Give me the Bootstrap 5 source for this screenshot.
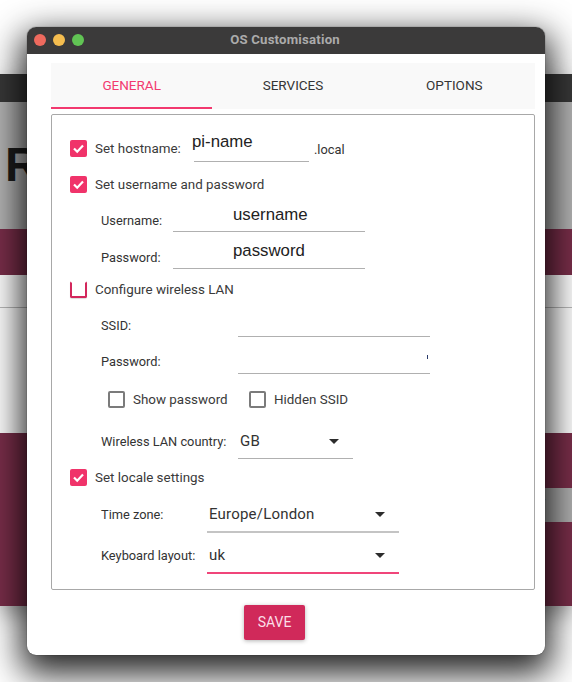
<!DOCTYPE html>
<html>
<head>
    <title>OS Customisation</title>
    <link href="https://cdn.jsdelivr.net/npm/bootstrap@5.3.0/dist/css/bootstrap.min.css" rel="stylesheet">
    <style>
        html, body { margin: 0; height: 682px; overflow: hidden; background: #fff; }
        body { position: relative; width: 572px; font-family: Roboto, sans-serif; color: #333; }

        /* window behind the dialog */
        .back-win { position: absolute; left: 0; width: 572px; top: 74px; height: 532px; box-shadow: 0 8px 20px rgba(0,0,0,.35); display: flex; flex-direction: column; overflow: hidden; }
        .back-title { height: 28px; background: #383838; }
        .back-head { height: 127px; background: #b4b4b4; position: relative; }
        .back-band { height: 46px; background: #7a2e4a; }
        .back-strip { height: 33px; background: #fff; border-bottom: 1px solid #bbb; }
        .back-body { height: 125px; background: #fff; }
        .back-foot { flex: 1; background: #7a2e4a; position: relative; }
        .back-btn { position: absolute; right: 0; top: 55px; width: 50px; height: 34px; background: #b0b0b0; color: #666; font-size: 14px; line-height: 34px; padding-left: 15px; }
        .back-letter { position: absolute; left: 5px; top: 39px; font: 700 48px/1 "Liberation Sans", sans-serif; color: #1c1c1c; }

        /* dialog */
        .dlg { position: absolute; left: 27px; top: 27px; width: 518px; height: 628px; background: #fff; border-radius: 9px; overflow: hidden; box-shadow: 0 0 1px rgba(0,0,0,.8), 0 13px 34px 6px rgba(0,0,0,.85); }
        .dlg-title { height: 27px; padding-right: 2px; background: #3b3a3a; position: relative; color: #ababab; font: 700 13.2px/26px Roboto, sans-serif; text-align: center; letter-spacing: .2px; }
        .dot { width: 12px; height: 12px; border-radius: 50%; }
        .dots { position: absolute; left: 7px; top: 7px; gap: 7px; }
        .dlg-tabs { margin: 9px 10px 0 24px; height: 46px; background: #f9f9f9; }
        .dlg-tab { flex: 1 1 0; height: 46px; line-height: 45px; text-align: center; font-size: 13.5px; color: #353535; }
        .dlg-tab.on { color: #f2396f; border-bottom: 2px solid #f2396f; }

        .frame { margin: 5px 10px 0 24px; height: 476px; border: 1px solid #a8a8a8; border-radius: 2px; padding-left: 18px; }
        .line { display: flex; align-items: center; position: absolute; }
        .frame-in { position: relative; height: 100%; }
        .tick { width: 17px; height: 17px; border-radius: 2px; background: #f0336a; flex: none; display: block; }
        .tick.off { background: transparent; border: 2px solid #d3275c; border-top-color: transparent; box-shadow: 0 1px 1px rgba(0,0,0,.15); }
        .tick.plain { background: transparent; border: 2px solid #7b7b7b; }
        .cap { color: #3a3a3a; font-size: 13.4px; line-height: 17px; white-space: nowrap; }
        .lbl { position: absolute; color: #333; font-size: 12.8px; white-space: nowrap; }
        .under { position: absolute; height: 1px; background: #b0b0b0; }
        .val { position: absolute; font: 16.8px/20px "Liberation Sans", sans-serif; color: #222; white-space: nowrap; }
        .sel { position: absolute; font: 15px/20px Roboto, sans-serif; color: #333; letter-spacing: .2px; }
        .caret { position: absolute; width: 0; height: 0; border-left: 5px solid transparent; border-right: 5px solid transparent; border-top: 5px solid #2c2c2c; }
        .speck { position: absolute; left: 357px; top: 240px; width: 1px; height: 4px; background: #2a3a6a; }

        .btn-save { position: absolute; left: 217px; top: 578px; width: 61px; height: 35px; padding: 0; border: 0; border-radius: 2px; background: #d0295a; color: #fbdfe7; font-size: 14px; box-shadow: 0 1px 4px rgba(0,0,0,.3); }
    </style>
</head>
<body>
    <div class="back-win">
        <div class="back-title"></div>
        <div class="back-head"><div class="back-letter">R</div></div>
        <div class="back-band"></div>
        <div class="back-strip"></div>
        <div class="back-body"></div>
        <div class="back-foot"><div class="back-btn">T</div></div>
    </div>

    <div class="dlg">
        <div class="dlg-title">
            <div class="dots d-flex">
                <span class="dot" style="background:#ee6a5e"></span>
                <span class="dot" style="background:#f5bd4f"></span>
                <span class="dot" style="background:#61c454"></span>
            </div>
            OS Customisation
        </div>

        <div class="dlg-tabs d-flex">
            <div class="dlg-tab on">GENERAL</div>
            <div class="dlg-tab">SERVICES</div>
            <div class="dlg-tab">OPTIONS</div>
        </div>

        <div class="frame">
            <div class="frame-in">
                <!-- coordinates inside the frame: page x - 70, page y - 115 -->
                <div class="line gap-2" style="left:0;top:25px"><svg class="tick" viewBox="0 0 17 17"><path d="M4 8.5l3.2 3.2L13 5.6" fill="none" stroke="#fff" stroke-width="2.2"/></svg><span class="cap">Set hostname:</span></div>
                <div class="val" style="left:122px;top:17px">pi-name</div>
                <div class="under" style="left:124px;top:46px;width:115px"></div>
                <div class="lbl" style="left:244px;top:25px">.local</div>

                <div class="line gap-2" style="left:0;top:61px"><svg class="tick" viewBox="0 0 17 17"><path d="M4 8.5l3.2 3.2L13 5.6" fill="none" stroke="#fff" stroke-width="2.2"/></svg><span class="cap">Set username and password</span></div>
                <div class="lbl" style="left:31px;top:96px">Username:</div>
                <div class="val" style="left:163px;top:90px">username</div>
                <div class="under" style="left:103px;top:116px;width:192px"></div>
                <div class="lbl" style="left:31px;top:133px">Password:</div>
                <div class="val" style="left:163px;top:126px">password</div>
                <div class="under" style="left:103px;top:153px;width:192px"></div>

                <div class="line gap-2" style="left:0;top:166px"><span class="tick off"></span><span class="cap">Configure wireless LAN</span></div>
                <div class="lbl" style="left:31px;top:201px">SSID:</div>
                <div class="under" style="left:168px;top:221px;width:192px"></div>
                <div class="lbl" style="left:31px;top:237px">Password:</div>
                <div class="speck"></div>
                <div class="under" style="left:168px;top:258px;width:192px"></div>

                <div class="line gap-2" style="left:38px;top:276px"><span class="tick plain"></span><span class="cap">Show password</span></div>
                <div class="line gap-2" style="left:179px;top:276px"><span class="tick plain"></span><span class="cap">Hidden SSID</span></div>

                <div class="lbl" style="left:31px;top:317px">Wireless LAN country:</div>
                <div class="sel" style="left:170px;top:316px">GB</div>
                <div class="caret" style="left:259px;top:324px"></div>
                <div class="under" style="left:168px;top:343px;width:115px"></div>

                <div class="line gap-2" style="left:0;top:354px"><svg class="tick" viewBox="0 0 17 17"><path d="M4 8.5l3.2 3.2L13 5.6" fill="none" stroke="#fff" stroke-width="2.2"/></svg><span class="cap">Set locale settings</span></div>
                <div class="lbl" style="left:31px;top:390px">Time zone:</div>
                <div class="sel" style="left:139px;top:389px">Europe/London</div>
                <div class="caret" style="left:305px;top:397px"></div>
                <div class="under" style="left:137px;top:416px;width:192px;height:2px;background:#c4c4c4"></div>
                <div class="lbl" style="left:31px;top:431px">Keyboard layout:</div>
                <div class="sel" style="left:139px;top:430px">uk</div>
                <div class="caret" style="left:305px;top:438px"></div>
                <div class="under" style="left:137px;top:457px;width:192px;height:2px;background:#f0457a"></div>
            </div>
        </div>

        <button class="btn btn-save">SAVE</button>
    </div>
</body>
</html>
